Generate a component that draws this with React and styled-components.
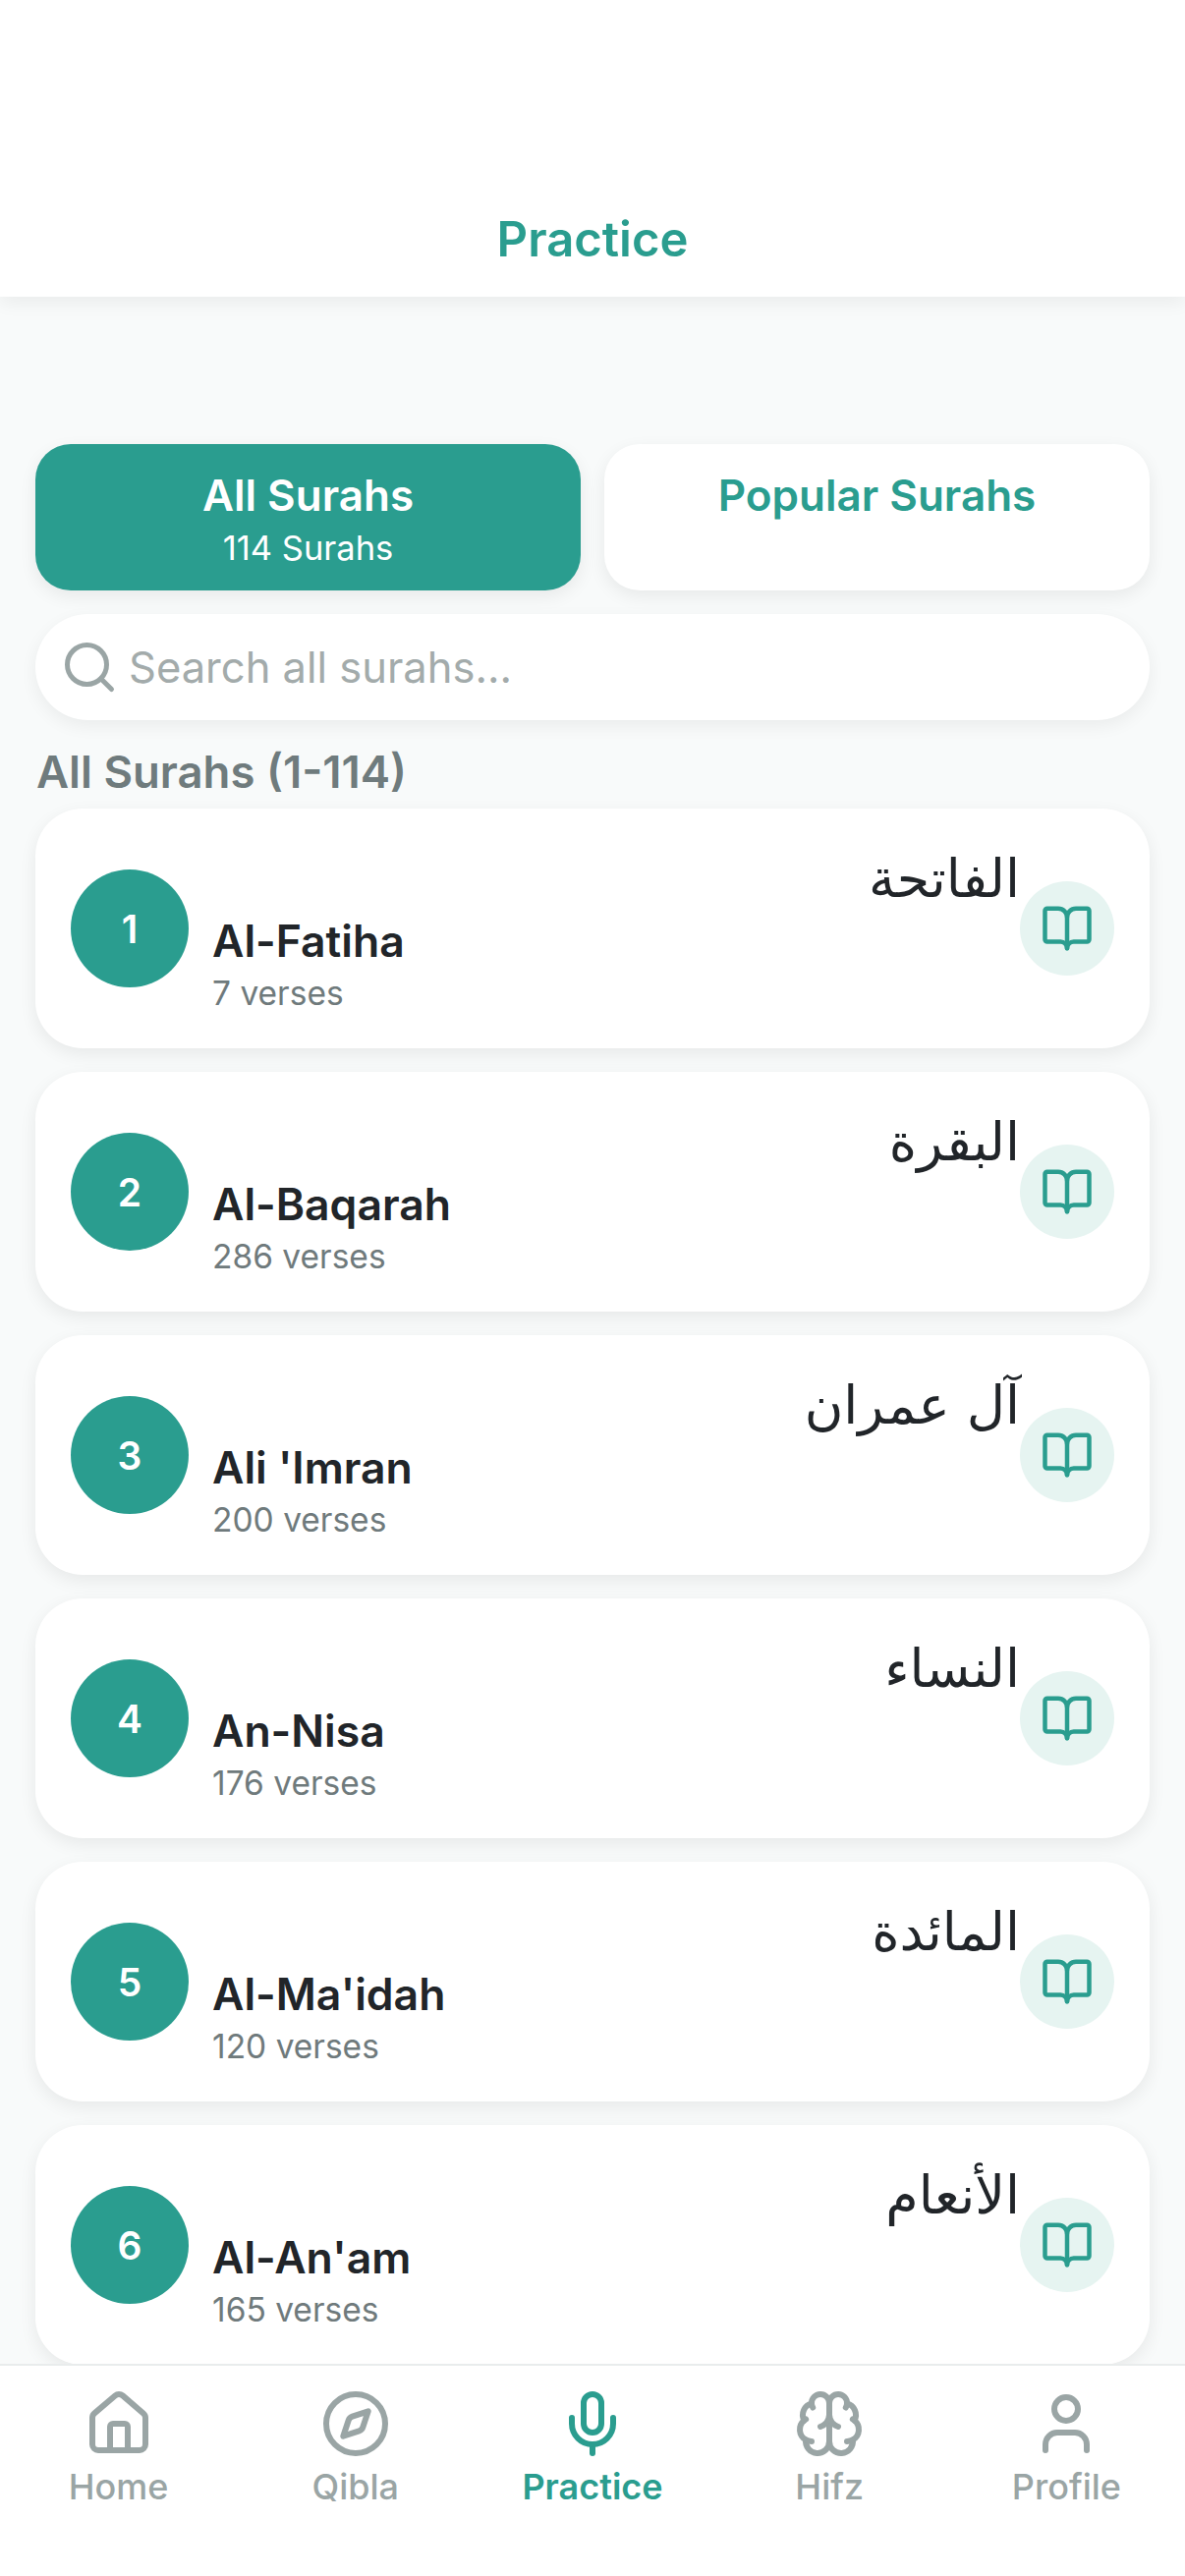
import React from "react";
import styled, { createGlobalStyle } from "styled-components";
import { BookOpen, Compass, House, Mic, Search, User } from "lucide-react";

const TEAL = "#2a9d8f";
const LATIN = '"Inter", "Liberation Sans", sans-serif';

const surahs = [
	{ id: 1, name: "Al-Fatiha", arabic: "الفاتحة", verses: 7 },
	{ id: 2, name: "Al-Baqarah", arabic: "البقرة", verses: 286 },
	{ id: 3, name: "Ali 'Imran", arabic: "آل عمران", verses: 200 },
	{ id: 4, name: "An-Nisa", arabic: "النساء", verses: 176 },
	{ id: 5, name: "Al-Ma'idah", arabic: "المائدة", verses: 120 },
	{ id: 6, name: "Al-An'am", arabic: "الأنعام", verses: 165 },
];

// the lobed brain with a centre stem, not the one in the icon package
const BrainIcon = ({ size }) => (
	<svg
		width={size}
		height={size}
		viewBox="0 0 24 24"
		fill="none"
		stroke="currentColor"
		strokeWidth="2"
		strokeLinecap="round"
		strokeLinejoin="round"
	>
		<path d="M12 5a3 3 0 1 0-5.997.125 4 4 0 0 0-2.526 5.77 4 4 0 0 0 .556 6.588A4 4 0 1 0 12 18Z" />
		<path d="M12 5a3 3 0 1 1 5.997.125 4 4 0 0 1 2.526 5.77 4 4 0 0 1-.556 6.588A4 4 0 1 1 12 18Z" />
		<path d="M15 13a4.5 4.5 0 0 1-3-4 4.5 4.5 0 0 1-3 4" />
		<path d="M17.599 6.5a3 3 0 0 0 .399-1.375" />
		<path d="M6.003 5.125A3 3 0 0 0 6.401 6.5" />
		<path d="M3.477 10.896a4 4 0 0 1 .585-.396" />
		<path d="M19.938 10.5a4 4 0 0 1 .585.396" />
		<path d="M6 18a4 4 0 0 1-1.967-.516" />
		<path d="M19.967 17.484A4 4 0 0 1 18 18" />
	</svg>
);

const navItems = [
	{ label: "Home", Icon: House },
	{ label: "Qibla", Icon: Compass },
	{ label: "Practice", Icon: Mic, active: true },
	{ label: "Hifz", Icon: BrainIcon },
	{ label: "Profile", Icon: User },
];

const GlobalStyle = createGlobalStyle`
	* {
		box-sizing: border-box;
	}
	html, body {
		margin: 0;
		padding: 0;
		background: #f8fafa;
		font-family: ${LATIN};
	}
`;

const Screen = styled.div`
	display: flex;
	flex-direction: column;
	width: 1206px;
	height: 2622px;
	overflow: hidden;
	background: #f8fafa;
`;

const Header = styled.header`
	display: flex;
	align-items: flex-end;
	justify-content: center;
	flex: none;
	height: 302px;
	padding-bottom: 28px;
	background: #fff;
	box-shadow: 0 6px 18px rgba(0, 0, 0, 0.06);
	position: relative;
	z-index: 2;
`;

const Title = styled.h1`
	margin: 0;
	font-size: 49px;
	line-height: 60px;
	font-weight: 600;
	color: ${TEAL};
`;

const Content = styled.main`
	flex: 1;
	min-height: 0;
	overflow: hidden;
	padding: 150px 36px 0;
`;

const Tabs = styled.div`
	display: grid;
	grid-template-columns: 1fr 1fr;
	gap: 24px;
`;

const Tab = styled.div`
	display: flex;
	flex-direction: column;
	align-items: center;
	height: 149px;
	padding-top: 27px;
	border-radius: 36px;
	background: ${p => (p.$active ? TEAL : "#fff")};
	color: ${p => (p.$active ? "#fff" : TEAL)};
	box-shadow: 0 6px 18px rgba(0, 0, 0, 0.07);
`;

const TabTitle = styled.div`
	font-size: 44px;
	line-height: 50px;
	font-weight: 600;
`;

const TabCount = styled.div`
	margin-top: 9px;
	font-size: 34.5px;
	line-height: 40px;
`;

const SearchBar = styled.label`
	display: flex;
	align-items: center;
	gap: 10px;
	height: 108px;
	margin-top: 24px;
	padding: 0 25px;
	border-radius: 54px;
	background: #fff;
	color: #9aa5a5;
	box-shadow: 0 6px 18px rgba(0, 0, 0, 0.06);
`;

const SearchInput = styled.input`
	flex: 1;
	min-width: 0;
	border: 0;
	outline: 0;
	padding: 0;
	background: transparent;
	font-family: ${LATIN};
	font-size: 43.5px;
	color: #212529;

	&::placeholder {
		color: #a3abab;
		opacity: 1;
	}
`;

const SectionTitle = styled.h2`
	margin: 28px 0 12px 1px;
	font-size: 45.5px;
	line-height: 50px;
	font-weight: 600;
	color: #6f7b7d;
`;

const List = styled.div`
	display: flex;
	flex-direction: column;
	gap: 24px;
`;

const Card = styled.div`
	display: flex;
	align-items: center;
	gap: 24px;
	flex: none;
	height: 244px;
	padding: 0 36px;
	border-radius: 48px;
	background: #fff;
	box-shadow: 0 6px 18px rgba(0, 0, 0, 0.07);
`;

const Number = styled.div`
	display: flex;
	align-items: center;
	justify-content: center;
	flex: none;
	width: 120px;
	height: 120px;
	border-radius: 50%;
	background: ${TEAL};
	color: #fff;
	font-size: 39px;
	font-weight: 600;
`;

const Info = styled.div`
	flex: 1;
	min-width: 0;
	display: flex;
	flex-direction: column;
`;

const Arabic = styled.div`
	margin-top: 5px;
	direction: rtl;
	text-align: right;
	font-family: "DejaVu Sans", sans-serif;
	font-size: 54px;
	line-height: 64px;
	color: #212529;
`;

const Name = styled.div`
	margin-top: 4px;
	font-size: 44.5px;
	line-height: 54px;
	font-weight: 600;
	color: #212529;
`;

const Verses = styled.div`
	margin-top: 5px;
	font-size: 33.5px;
	line-height: 42px;
	color: #6f7a7c;
`;

const BookBadge = styled.div`
	display: flex;
	align-items: center;
	justify-content: center;
	flex: none;
	width: 96px;
	height: 96px;
	margin-left: -24px;
	border-radius: 50%;
	background: #e6f4f1;
	color: ${TEAL};
`;

const BottomNav = styled.nav`
	display: grid;
	grid-template-columns: repeat(5, 1fr);
	flex: none;
	height: 216px;
	padding: 23px 0 0;
	background: #fff;
	border-top: 2px solid #e9ecec;
	position: relative;
	z-index: 2;
`;

const NavItem = styled.div`
	display: flex;
	flex-direction: column;
	align-items: center;
	color: ${p => (p.$active ? TEAL : "#9aa5a5")};
`;

const NavLabel = styled.span`
	margin-top: 6px;
	font-size: 36px;
	line-height: 44px;
	font-weight: ${p => (p.$active ? 600 : 500)};
`;

export default function App() {
	return (
		<Screen>
			<GlobalStyle />
			<Header>
				<Title>Practice</Title>
			</Header>
			<Content>
				<Tabs>
					<Tab $active>
						<TabTitle>All Surahs</TabTitle>
						<TabCount>114 Surahs</TabCount>
					</Tab>
					<Tab>
						<TabTitle>Popular Surahs</TabTitle>
					</Tab>
				</Tabs>
				<SearchBar>
					<Search size={60} strokeWidth={2} />
					<SearchInput placeholder="Search all surahs..." readOnly />
				</SearchBar>
				<SectionTitle>All Surahs (1-114)</SectionTitle>
				<List>
					{surahs.map(s => (
						<Card key={s.id}>
							<Number>{s.id}</Number>
							<Info>
								<Arabic>{s.arabic}</Arabic>
								<Name>{s.name}</Name>
								<Verses>{s.verses} verses</Verses>
							</Info>
							<BookBadge>
								<BookOpen size={54} strokeWidth={2} />
							</BookBadge>
						</Card>
					))}
				</List>
			</Content>
			<BottomNav>
				{navItems.map(({ label, Icon, active }) => (
					<NavItem key={label} $active={active}>
						<Icon size={72} strokeWidth={2} />
						<NavLabel $active={active}>{label}</NavLabel>
					</NavItem>
				))}
			</BottomNav>
		</Screen>
	);
}
